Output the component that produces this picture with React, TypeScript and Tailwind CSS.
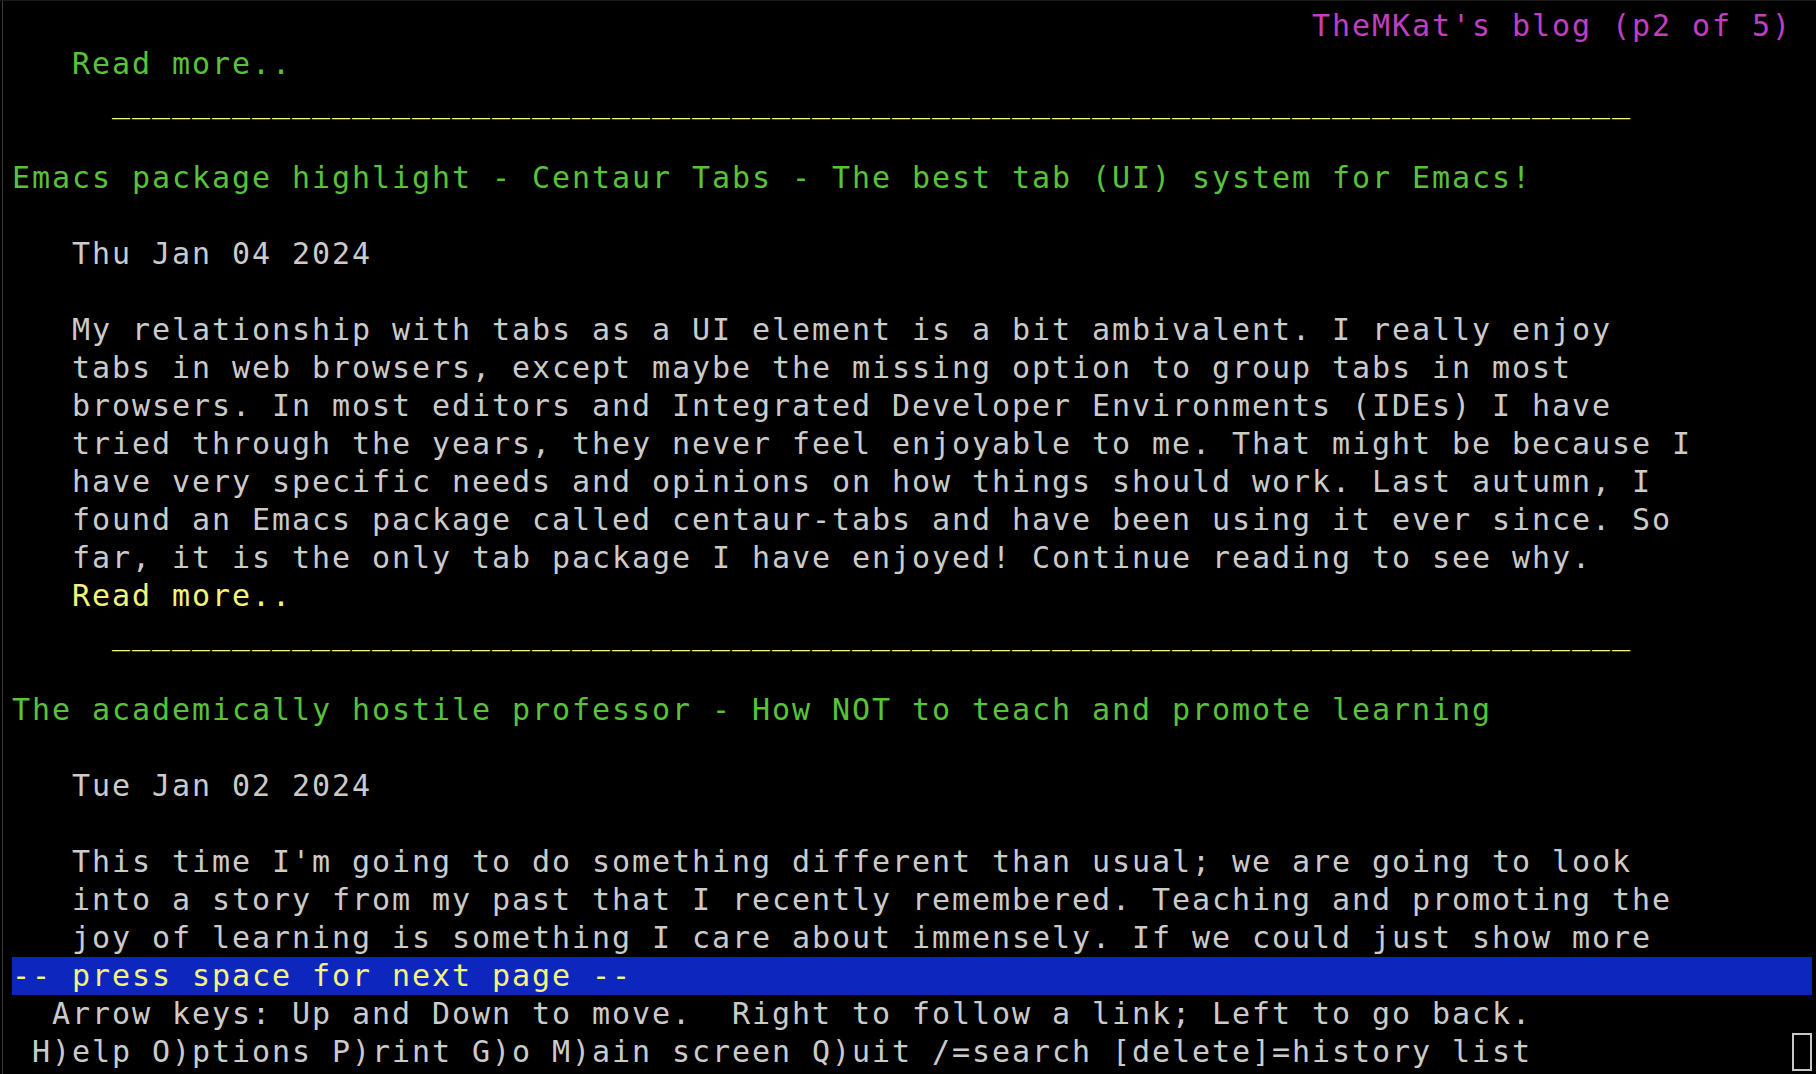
import React from 'react';

type Line = { text: string; tone?: 'green' | 'yellow' | 'magenta' | 'gray' };

// Colours of the terminal palette
const tones: Record<string, string> = {
  green: 'text-[#58c23b]',
  yellow: 'text-[#f4f47c]',
  magenta: 'text-[#c03fc0]',
  gray: 'text-[#cbcbcb]',
};

const rule = '     ' + '_'.repeat(76);

const lines: Line[] = [
  { text: ' '.repeat(65) + "TheMKat's blog (p2 of 5)", tone: 'magenta' },
  { text: '   Read more..', tone: 'green' },
  { text: rule, tone: 'yellow' },
  { text: '' },
  { text: 'Emacs package highlight - Centaur Tabs - The best tab (UI) system for Emacs!', tone: 'green' },
  { text: '' },
  { text: '   Thu Jan 04 2024' },
  { text: '' },
  { text: '   My relationship with tabs as a UI element is a bit ambivalent. I really enjoy' },
  { text: '   tabs in web browsers, except maybe the missing option to group tabs in most' },
  { text: '   browsers. In most editors and Integrated Developer Environments (IDEs) I have' },
  { text: '   tried through the years, they never feel enjoyable to me. That might be because I' },
  { text: '   have very specific needs and opinions on how things should work. Last autumn, I' },
  { text: '   found an Emacs package called centaur-tabs and have been using it ever since. So' },
  { text: '   far, it is the only tab package I have enjoyed! Continue reading to see why.' },
  { text: '   Read more..', tone: 'yellow' },
  { text: rule, tone: 'yellow' },
  { text: '' },
  { text: 'The academically hostile professor - How NOT to teach and promote learning', tone: 'green' },
  { text: '' },
  { text: '   Tue Jan 02 2024' },
  { text: '' },
  { text: "   This time I'm going to do something different than usual; we are going to look" },
  { text: '   into a story from my past that I recently remembered. Teaching and promoting the' },
  { text: '   joy of learning is something I care about immensely. If we could just show more' },
];

function Row({ line }: { line: Line }) {
  return <div className={`h-[38px] ${tones[line.tone ?? 'gray']}`}>{line.text || ' '}</div>;
}

export default function App() {
  return (
    <div className="h-screen w-full overflow-hidden bg-black border-t border-[#1a1a1a]">
      <div
        className="ml-[2px] h-full border-l border-[#3a3a3a] pl-[9px] pt-[5px] whitespace-pre text-[30px] leading-[38px] tracking-[1.9385px]"
        style={{ fontFamily: '"DejaVu Sans Mono", "Liberation Mono", monospace' }}
      >
        <div className="pt-[1px]">
          {lines.map((l, i) => (
            <Row key={i} line={l} />
          ))}
        </div>

        {/* status bar */}
        <div className="h-[38px] w-[1800px] bg-[#0d27be] text-[#f4f47c]">-- press space for next page --</div>

        <div className="h-[38px] text-[#cbcbcb]">  Arrow keys: Up and Down to move.  Right to follow a link; Left to go back.</div>
        <div className="flex h-[38px] w-[1800px] items-center text-[#cbcbcb]">
          <span className="flex-1"> H)elp O)ptions P)rint G)o M)ain screen Q)uit /=search [delete]=history list</span>
          <span className="h-[38px] w-[20px] border-2 border-[#c8c8c8]" />
        </div>
      </div>
    </div>
  );
}
